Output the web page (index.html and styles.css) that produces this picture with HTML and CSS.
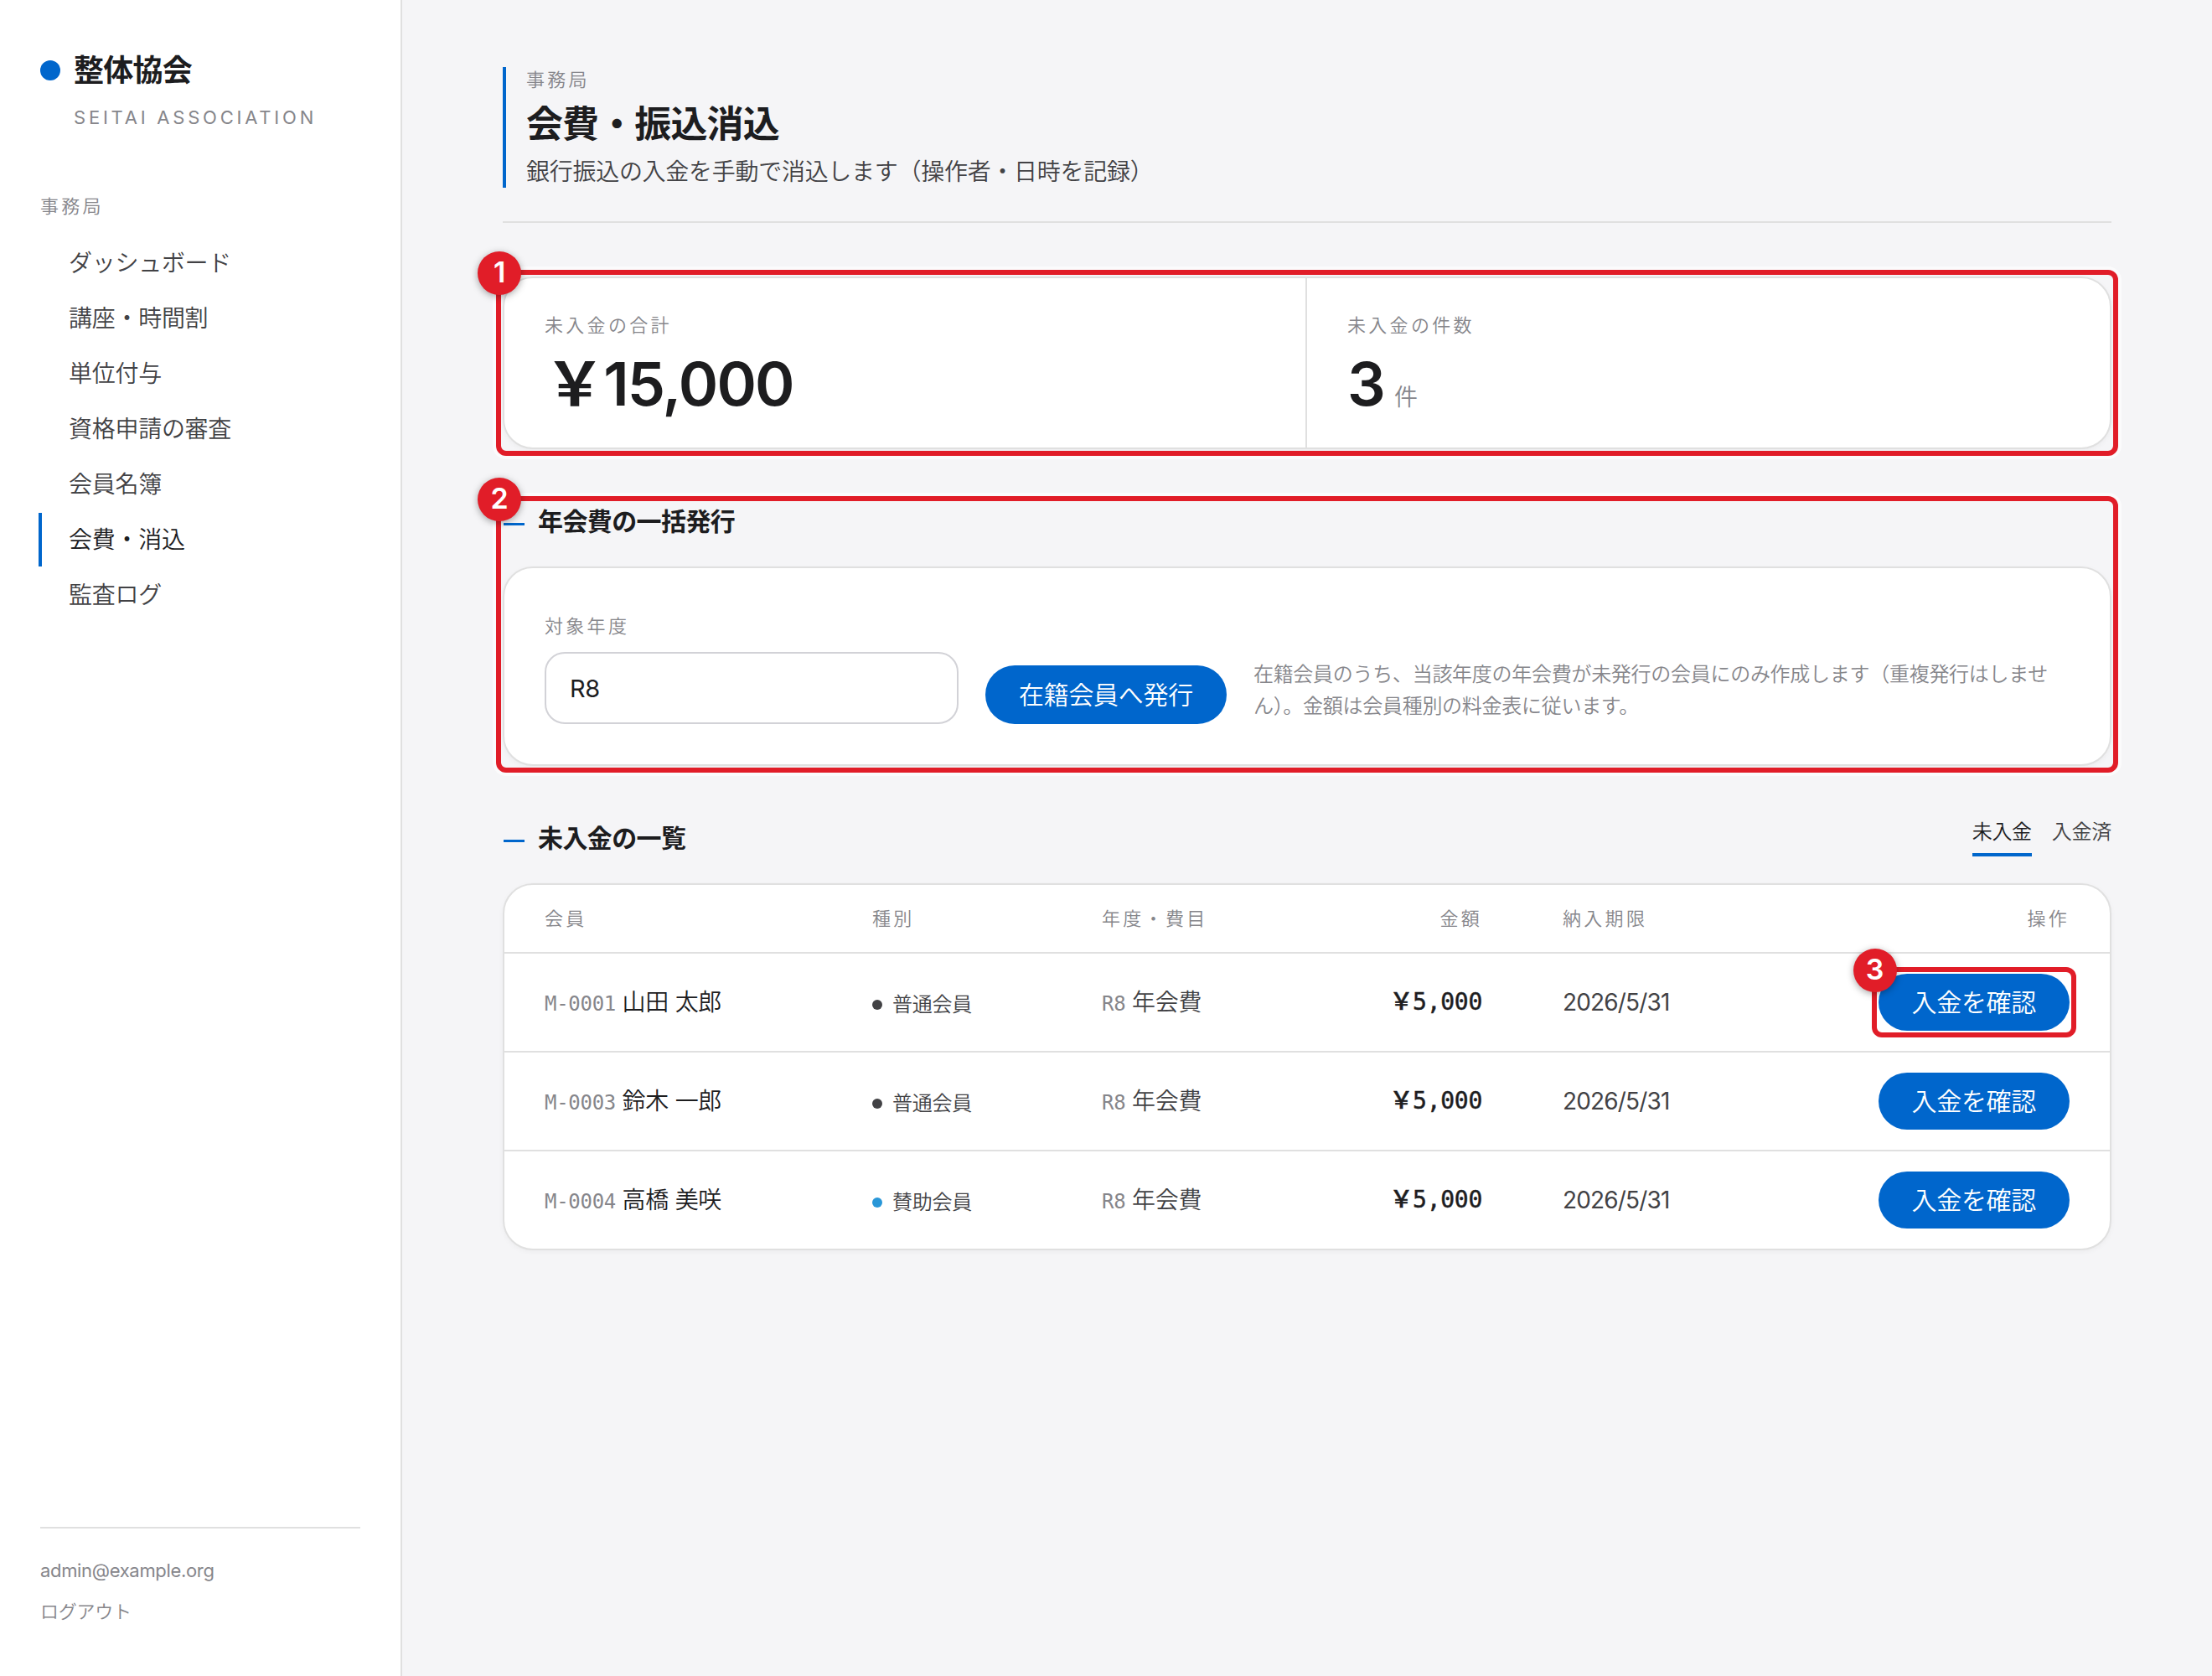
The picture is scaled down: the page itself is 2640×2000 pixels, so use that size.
FILE: index.html
```
<!DOCTYPE html>
<html lang="ja">
<head>
  <meta charset="utf-8">
  <meta name="viewport" content="width=device-width">
  <title>会費・振込消込</title>
  <link rel="stylesheet" href="styles.css">
</head>
<body>
  <aside class="sidebar">
    <div class="brand"><span class="brand-dot"></span>整体協会</div>
    <div class="brand-sub">SEITAI ASSOCIATION</div>
    <div class="nav-label">事務局</div>
    <nav class="nav">
      <a>ダッシュボード</a>
      <a>講座・時間割</a>
      <a>単位付与</a>
      <a>資格申請の審査</a>
      <a>会員名簿</a>
      <a class="active">会費・消込</a>
      <a>監査ログ</a>
    </nav>
    <div class="account">
      <div>admin@example.org</div>
      <a>ログアウト</a>
    </div>
  </aside>

  <main class="main">
    <header class="page-head">
      <div class="page-title">
        <div class="eyebrow">事務局</div>
        <h1>会費・振込消込</h1>
        <p>銀行振込の入金を手動で消込します（操作者・日時を記録）</p>
      </div>
    </header>

    <section class="marked">
      <div class="card stats">
        <div class="stat">
          <div class="label">未入金の合計</div>
          <div class="value">￥15,000</div>
        </div>
        <div class="stat">
          <div class="label">未入金の件数</div>
          <div class="value">3<small>件</small></div>
        </div>
      </div>
      <div class="mark"><span class="mark-no">1</span></div>
    </section>

    <section class="marked">
      <h2>年会費の一括発行</h2>
      <form class="card issue">
        <div class="field">
          <label class="label" for="year">対象年度</label>
          <input id="year" type="text" value="R8">
        </div>
        <button type="button" class="btn btn-issue">在籍会員へ発行</button>
        <p class="hint">在籍会員のうち、当該年度の年会費が未発行の会員にのみ作成します（重複発行はしません）。金額は会員種別の料金表に従います。</p>
      </form>
      <div class="mark"><span class="mark-no">2</span></div>
    </section>

    <section>
      <div class="list-head">
        <h2>未入金の一覧</h2>
        <div class="tabs">
          <a class="active">未入金</a>
          <a>入金済</a>
        </div>
      </div>
      <div class="card">
        <table>
          <colgroup>
            <col class="c-member"><col class="c-kind"><col class="c-item"><col class="c-amount"><col class="c-due"><col class="c-action">
          </colgroup>
          <thead>
            <tr><th>会員</th><th>種別</th><th>年度・費目</th><th class="right">金額</th><th>納入期限</th><th class="right">操作</th></tr>
          </thead>
          <tbody>
            <tr>
              <td class="name"><span class="code">M-0001</span> 山田 太郎</td>
              <td><span class="kind">普通会員</span></td>
              <td><span class="code">R8</span> 年会費</td>
              <td class="amount right">￥5,000</td>
              <td class="due">2026/5/31</td>
              <td class="right"><div class="marked action"><button type="button" class="btn">入金を確認</button><div class="mark"><span class="mark-no">3</span></div></div></td>
            </tr>
            <tr>
              <td class="name"><span class="code">M-0003</span> 鈴木 一郎</td>
              <td><span class="kind">普通会員</span></td>
              <td><span class="code">R8</span> 年会費</td>
              <td class="amount right">￥5,000</td>
              <td class="due">2026/5/31</td>
              <td class="right"><div class="action"><button type="button" class="btn">入金を確認</button></div></td>
            </tr>
            <tr>
              <td class="name"><span class="code">M-0004</span> 高橋 美咲</td>
              <td><span class="kind support">賛助会員</span></td>
              <td><span class="code">R8</span> 年会費</td>
              <td class="amount right">￥5,000</td>
              <td class="due">2026/5/31</td>
              <td class="right"><div class="action"><button type="button" class="btn">入金を確認</button></div></td>
            </tr>
          </tbody>
        </table>
      </div>
    </section>
  </main>
</body>
</html>
```
FILE: styles.css
```
:root {
  --ink: #1d1d1f;
  --ink-2: #424245;
  --muted: #86868b;
  --line: #e0e0e0;
  --blue: #0066cc;
  --red: #e11d28;
  --sans: Inter, "Noto Sans CJK JP", sans-serif;
  --mono: "DejaVu Sans Mono", "Noto Sans CJK JP", monospace;
}
* { box-sizing: border-box; }
body {
  margin: 0;
  display: flex;
  min-height: 2000px;
  background: #f5f5f7;
  color: var(--ink);
  font: 350 28px/1.6 var(--sans);
  letter-spacing: -0.01em;
}
h1, h2, p { margin: 0; }

/* sidebar */
.sidebar {
  display: flex;
  flex-direction: column;
  flex: none;
  width: 480px;
  padding: 56px 48px 59px;
  background: #fff;
  border-right: 2px solid var(--line);
}
.brand {
  display: flex;
  align-items: center;
  gap: 16px;
  height: 56px;
  font-size: 36px;
  font-weight: 600;
  line-height: 54px;
  letter-spacing: -0.02em;
}
.brand-dot {
  width: 24px;
  height: 24px;
  border-radius: 50%;
  background: var(--blue);
}
.brand-sub {
  margin: 10px 0 0 40px;
  font-size: 22px;
  font-weight: 400;
  line-height: 36px;
  letter-spacing: 0.172em;
  color: var(--muted);
  white-space: nowrap;
}
.nav-label, .eyebrow, .label, th {
  font-size: 22px;
  font-weight: 350;
  line-height: 31px;
  letter-spacing: 0.15em;
  color: var(--muted);
}
.nav-label { margin-top: 73px; }
.nav {
  display: flex;
  flex-direction: column;
  gap: 2px;
  margin: 20px 0 0 -2px;
}
.nav a {
  padding-left: 32px;
  line-height: 64px;
  color: var(--ink-2);
  border-left: 4px solid transparent;
}
.nav a.active {
  color: var(--ink);
  border-color: var(--blue);
}
.account {
  display: flex;
  flex-direction: column;
  gap: 13px;
  margin-top: auto;
  padding-top: 32px;
  border-top: 2px solid var(--line);
  font-size: 22px;
  line-height: 36px;
  color: var(--muted);
}
.account div {
  font-weight: 400;
  letter-spacing: -0.015em;
}

/* content */
.main {
  flex: 1;
  display: flex;
  flex-direction: column;
  gap: 64px;
  padding: 80px 120px;
}
.page-head {
  padding-bottom: 40px;
  border-bottom: 2px solid var(--line);
}
.page-title {
  height: 144px;
  padding-left: 24px;
  border-left: 4px solid var(--blue);
}
h1 {
  font-size: 44px;
  font-weight: 600;
  line-height: 74px;
  letter-spacing: -0.02em;
}
.page-title p {
  line-height: 40px;
  color: var(--ink-2);
}
h2 {
  display: flex;
  align-items: center;
  gap: 16px;
  margin-bottom: 32px;
  font-size: 30px;
  font-weight: 600;
  line-height: 44px;
  letter-spacing: -0.02em;
}
h2::before {
  content: "";
  width: 25px;
  height: 3px;
  margin: 6px 0 0 1px;
  background: var(--blue);
}
.card {
  background: #fff;
  border: 2px solid var(--line);
  border-radius: 36px;
  box-shadow: 0 2px 6px rgba(0,0,0,.04);
}
.stats {
  display: grid;
  grid-template-columns: 1fr 1fr;
}
.stat { padding: 41px 48px 40px; }
.stat:first-child { border-right: 2px solid var(--line); }
.value {
  height: 72px;
  margin-top: 18px;
  font-size: 72px;
  font-weight: 600;
  line-height: 72px;
  letter-spacing: -0.025em;
}
.value small {
  margin-left: 12px;
  font-size: 28px;
  font-weight: 350;
  line-height: 1;
  color: var(--muted);
}
.issue {
  display: flex;
  align-items: flex-end;
  gap: 32px;
  padding: 48px;
}
.field {
  display: flex;
  flex-direction: column;
  width: 494px;
}
.field .label { margin: 6px 0 15px; }
input {
  height: 86px;
  padding: 0 28px;
  border: 2px solid #d2d2d7;
  border-radius: 24px;
  background: #fff;
  color: var(--ink);
  font: 400 29px var(--sans);
  letter-spacing: -0.01em;
}
.btn {
  height: 68px;
  padding: 0 40px;
  border: none;
  border-radius: 36px;
  background: var(--blue);
  color: #fff;
  font: 350 30px/68px var(--sans);
  letter-spacing: -0.01em;
  white-space: nowrap;
}
.btn-issue { height: 70px; }
.hint {
  flex: 1;
  padding-bottom: 2px;
  font-size: 24px;
  line-height: 38px;
  color: var(--muted);
}
.list-head {
  display: flex;
  justify-content: space-between;
}
.tabs {
  display: flex;
  gap: 24px;
  height: 44px;
  font-size: 24px;
  line-height: 30px;
  color: var(--ink-2);
}
.tabs a.active {
  color: var(--ink);
  border-bottom: 4px solid var(--blue);
}

/* table */
table {
  width: 100%;
  table-layout: fixed;
  border-collapse: separate;
  border-spacing: 0;
}
.c-member { width: 391px; }
.c-kind { width: 274px; }
.c-item { width: 280px; }
.c-amount { width: 270px; }
.c-due { width: 336px; }
th, td {
  padding: 0 48px;
  text-align: left;
  white-space: nowrap;
}
th {
  height: 82px;
  border-bottom: 2px solid var(--line);
}
td {
  height: 118px;
  color: var(--ink-2);
  border-bottom: 2px solid var(--line);
}
tr:last-child td {
  height: 116px;
  border-bottom: none;
}
thead tr:last-child th { height: 82px; }
.right { text-align: right; }
.name { color: var(--ink); }
.code {
  font-family: var(--mono);
  font-size: 24px;
  color: var(--muted);
}
.kind {
  display: inline-flex;
  align-items: center;
  gap: 12px;
  font-size: 24px;
}
.kind::before {
  content: "";
  width: 12px;
  height: 12px;
  border-radius: 50%;
  background: var(--ink-2);
}
.kind.support::before { background: #2997d8; }
.amount {
  font-family: var(--mono);
  font-weight: 500;
  color: var(--ink);
  -webkit-text-stroke: .5px var(--ink);
}
.due {
  font-weight: 400;
  letter-spacing: -0.03em;
}
.action {
  display: flex;
  width: fit-content;
  margin-left: auto;
}

/* numbered callouts */
.marked { position: relative; }
.mark {
  position: absolute;
  inset: -8px;
  border: 6px solid var(--red);
  border-radius: 12px;
  box-shadow: 0 0 0 4px rgba(255,255,255,.6);
}
.mark-no {
  position: absolute;
  top: -28px;
  left: -28px;
  width: 52px;
  height: 52px;
  border-radius: 50%;
  background: var(--red);
  box-shadow: 0 2px 8px rgba(0,0,0,.35);
  color: #fff;
  font-size: 34px;
  font-weight: 600;
  line-height: 50px;
  text-align: center;
}
```
